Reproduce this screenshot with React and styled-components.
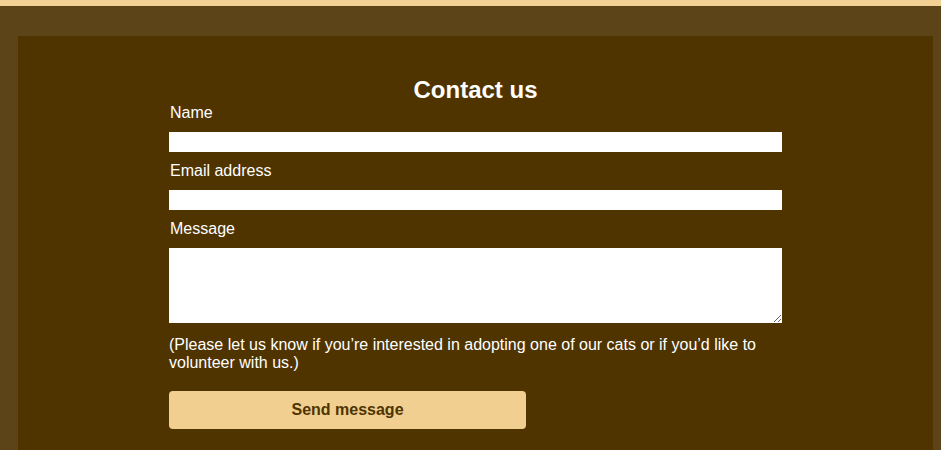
import styled, { createGlobalStyle } from "styled-components"

const Global = createGlobalStyle`
    body {
        margin: 0;
        background: #5c4418;
        font-family: "Liberation Sans", Arial, sans-serif;
    }
`

export default function App() {
    return (
        <Page>
            <Global />
            <TopBar />
            <Outer>
                <Panel>
                    <Form onSubmit={e => e.preventDefault()}>
                        <Title>Contact us</Title>

                        <Label htmlFor="name">Name</Label>
                        <Field id="name" type="text" />

                        <Label htmlFor="email">Email address</Label>
                        <Field id="email" type="email" />

                        <Label htmlFor="msg">Message</Label>
                        <Area id="msg" />

                        <Note>
                            (Please let us know if you’re interested in adopting one of our cats or if you’d like to volunteer with us.)
                        </Note>

                        <Button type="submit">Send message</Button>
                    </Form>
                </Panel>
            </Outer>
        </Page>
    )
}

const Page = styled.div`
    min-height: 450px;
    background: #5c4418;
`

const TopBar = styled.div`
    height: 6px;
    background: #f3d194;
`

const Outer = styled.div`
    padding: 30px 8px 0 18px;
`

const Panel = styled.div`
    background: #4f3400;
    padding: 40px 0 40px;
`

const Form = styled.form`
    width: 613px;
    margin: 0 auto;
    display: flex;
    flex-direction: column;
    color: #fff;
`

const Title = styled.h2`
    margin: 0;
    font-size: 24px;
    line-height: 28px;
    font-weight: 700;
    text-align: center;
`

const Label = styled.label`
    display: block;
    font-size: 16px;
    line-height: 18px;
    margin: 10px 0 10px;
    padding-left: 1px;

    &:first-of-type {
        margin-top: 0;
    }
`

const Field = styled.input`
    display: block;
    box-sizing: border-box;
    width: 100%;
    height: 20px;
    border: none;
    margin: 0;
    padding: 0 4px;
    background: #fff;
    font-family: inherit;
`

const Area = styled.textarea`
    display: block;
    box-sizing: border-box;
    width: 100%;
    height: 75px;
    border: none;
    margin: 0;
    padding: 4px;
    background: #fff;
    font-family: inherit;
`

const Note = styled.p`
    margin: 13px 0 0;
    font-size: 16px;
    line-height: 18px;
    padding-right: 20px;
`

const Button = styled.button`
    margin-top: 19px;
    width: 357px;
    height: 38px;
    border: none;
    border-radius: 4px;
    background: #f0cf91;
    color: #4f3400;
    font-family: inherit;
    font-size: 16px;
    font-weight: 700;
    cursor: pointer;
`
